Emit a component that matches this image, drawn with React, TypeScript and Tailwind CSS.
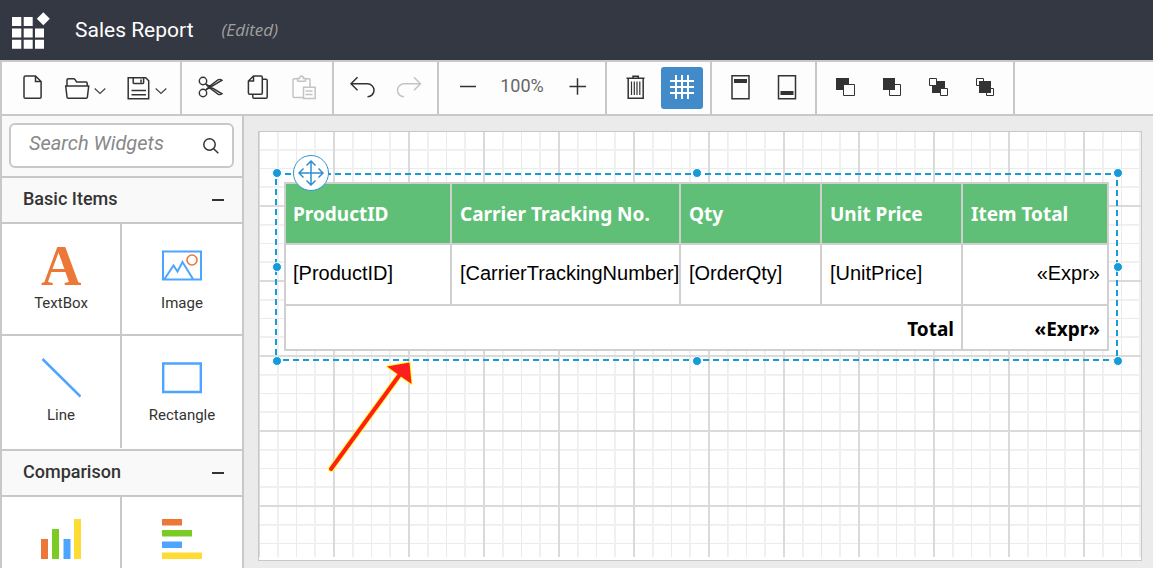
import React from "react";

type IconProps = { children: React.ReactNode; className?: string };

function Icon({ children, className = "text-[#333333]" }: IconProps) {
  return (
    <svg
      width="26"
      height="26"
      viewBox="0 0 26 26"
      fill="none"
      stroke="currentColor"
      strokeWidth="1.5"
      aria-hidden="true"
      className={className}
    >
      {children}
    </svg>
  );
}

function Chevron() {
  return (
    <svg width="12" height="8" viewBox="0 0 12 8" fill="none" stroke="#444" strokeWidth="1.2" aria-hidden="true" className="mt-1.5">
      <path d="M.7 1.5 6 6.5l5.300-5" />
    </svg>
  );
}

type ToolProps = { label: string; children: React.ReactNode; active?: boolean; disabled?: boolean };

function Tool({ label, children, active, disabled }: ToolProps) {
  return (
    <button
      type="button"
      aria-label={label}
      aria-pressed={active}
      disabled={disabled}
      className={`flex h-[42px] w-[42px] shrink-0 items-center justify-center rounded-[3px] ${active ? "bg-[#428bca]" : ""}`}
    >
      {children}
    </button>
  );
}

function SplitTool({ label, children }: ToolProps) {
  return (
    <button type="button" aria-label={label} aria-haspopup="menu" className="flex h-[42px] w-14 shrink-0 items-center justify-center gap-1 pr-0.5">
      {children}
      <Chevron />
    </button>
  );
}

function Group({ label, children, className = "px-[7px]" }: { label: string; children: React.ReactNode; className?: string }) {
  return (
    <div role="group" aria-label={label} className={`flex shrink-0 items-center gap-[5px] border-r-2 border-[#c8c8c8] ${className}`}>
      {children}
    </div>
  );
}

function Toolbar() {
  return (
    <div role="toolbar" aria-label="Report tools" className="flex h-14 shrink-0 border-y-2 border-l-2 border-[#c8c8c8] bg-[#fdfdfd]">
      <Group label="File" className="pl-[9px] pr-[5px]">
        <Tool label="New">
          <Icon>
            <path d="M16.500 1H6.500Q5 1 5 2.500V22q0 1.300 1.300 1.300h14.500q1.300 0 1.300-1.300V6.500zM16.500 1v5.500h5.600" />
          </Icon>
        </Tool>
        <SplitTool label="Open">
          <Icon>
            <path d="M3 11V5q0-1.200 1.200-1.200h5.300q1 0 1.600.9L12.600 7H22q1.200 0 1.200 1.200V11M1.700 11h23l-1.300 11q-.1 1.200-1.300 1.200H4.300Q3.100 23.200 3 22z" />
          </Icon>
        </SplitTool>
        <SplitTool label="Save">
          <Icon>
            <path d="M3.200 2.800h17.500l3 3v18H3.200zM8.200 2.800v5q0 .7.7.7h9q.7 0 .7-.7v-5M16 4.500v3M6.500 15.500h14.500M6.500 19.700h14.500" />
          </Icon>
        </SplitTool>
      </Group>

      <Group label="Clipboard">
        <Tool label="Cut">
          <Icon>
            <g strokeWidth="1.4">
              <circle cx="6" cy="6" r="3.700" />
              <circle cx="6" cy="18" r="3.700" />
              <path d="M8.500 8.800 25 18.800q-2 1.500-4 .3L11.500 12zM8.500 15.200 25 5.200q-2-1.500-4-.3L11.500 12z" />
            </g>
          </Icon>
        </Tool>
        <Tool label="Copy">
          <Icon>
            <path d="M9.500 1H17q1.300 0 1.300 1.300V18q0 1.300-1.300 1.300H5.700q-1.300 0-1.300-1.300V6zM9.500 1v5H4.400M18.300 4.200H22q1.200 0 1.200 1.200V22q0 1.300-1.200 1.300H10q-1.200 0-1.200-1.300v-2.700" />
          </Icon>
        </Tool>
        <Tool label="Paste" disabled>
          <Icon className="text-[#c4c4c4]">
            <path d="M12 22.500H3.200Q2 22.500 2 21.300V5q0-1.200 1.200-1.200h3.300M14.500 3.800h3.300Q19 3.800 19 5v6.500M6.500 5.500v-2h2Q8.700 1 10.500 1t2 2.500h2v2q0 .8-.8.8H7.300q-.8 0-.8-.8zM12.500 12.200h11.700v11.200H12.500zM14.500 16h7M14.500 19.500h7" />
          </Icon>
        </Tool>
      </Group>

      <Group label="History">
        <Tool label="Undo">
          <Icon>
            <path d="M8.500 2.300 2 8.800l6.500 6.500M2 8.800h16.500a6.500 6.500 0 0 1 0 13" />
          </Icon>
        </Tool>
        <Tool label="Redo" disabled>
          <Icon className="text-[#c4c4c4]">
            <path d="m18 2.300 6.500 6.500-6.500 6.500M24.500 8.800H8a6.500 6.500 0 0 0 0 13" />
          </Icon>
        </Tool>
      </Group>

      <Group label="Zoom">
        <Tool label="Zoom out">
          <Icon>
            <path d="M6 11.500h16" />
          </Icon>
        </Tool>
        <output className="w-[58px] pb-1 text-center text-lg leading-6 text-[#666666]">100%</output>
        <Tool label="Zoom in">
          <Icon>
            <path d="M5.500 11.500h16.500M13.500 3.300v16.500" />
          </Icon>
        </Tool>
      </Group>

      <Group label="Edit">
        <Tool label="Delete">
          <Icon>
            <path d="M4.500 3.200h18M6.200 3.200v20h15v-20M11 3V1.200h5.300V3" />
            <path strokeWidth="1.200" d="M9.500 6.500v13.500M12.300 6.500v13.500M15 6.500v13.500M17.800 6.500v13.500" />
          </Icon>
        </Tool>
        <Tool label="Show grid" active>
          <Icon className="text-white">
            <path strokeWidth="2" d="M7 0v24M13 0v24M19 0v24M1 6h24M1 12h24M1 18h24" />
          </Icon>
        </Tool>
      </Group>

      <Group label="Page sections">
        <Tool label="Header">
          <Icon>
            <path d="M5 .8h17v23H5z" />
            <path fill="currentColor" stroke="none" d="M7 4h13v4H7z" />
          </Icon>
        </Tool>
        <Tool label="Footer">
          <Icon>
            <path d="M4.500.8h17v23h-17z" />
            <path fill="currentColor" stroke="none" d="M6.500 16h13v4h-13z" />
          </Icon>
        </Tool>
      </Group>

      <Group label="Arrange" className="pl-[7px] pr-1.5">
        <Tool label="Bring forward">
          <Icon>
            <path fill="currentColor" stroke="none" d="M4 3h13v12H4z" />
            <path fill="#fdfdfd" strokeWidth="1" d="M11.500 9.500h11v11h-11z" />
          </Icon>
        </Tool>
        <Tool label="Send backward">
          <Icon>
            <path fill="#fdfdfd" strokeWidth="1" d="M10.500 9.500h11v11h-11z" />
            <path fill="currentColor" stroke="none" d="M4 3h12v12H4z" />
          </Icon>
        </Tool>
        <Tool label="Bring to front">
          <Icon>
            <path fill="currentColor" stroke="none" d="M6 6h13v12H6z" />
            <path fill="#fdfdfd" strokeWidth="1" d="M3.500 3.500h7v7h-7zM14.500 13.500h7v7h-7z" />
          </Icon>
        </Tool>
        <Tool label="Send to back">
          <Icon>
            <path fill="#fdfdfd" strokeWidth="1" d="M3.500 3.500h7v7h-7zM13.500 13.500h7v7h-7z" />
            <path fill="currentColor" stroke="none" d="M6 6h12v12H6z" />
          </Icon>
        </Tool>
      </Group>
    </div>
  );
}

function Widget({ name, children, className = "" }: { name?: string; children: React.ReactNode; className?: string }) {
  return (
    <button type="button" aria-label={name} className={`flex h-28 flex-col items-center border-[#c8c8c8] pt-[22px] odd:border-r-2 ${className}`}>
      <span className="flex h-10 w-10 shrink-0 items-center justify-center">{children}</span>
      {name && <span className="mt-1.5 text-[15px] leading-[22px]">{name}</span>}
    </button>
  );
}

function SectionHeader({ title }: { title: string }) {
  return (
    <h2 className="border-y-2 border-[#c8c8c8] bg-[#f9f9f9]">
      <button type="button" aria-expanded="true" className="flex h-11 w-full items-center justify-between pl-[21px] pr-[18px] text-lg font-medium leading-6">
        <span className="pb-0.5">{title}</span>
        <span className="h-0.5 w-3 bg-[#333333]" />
      </button>
    </h2>
  );
}

function Sidebar() {
  return (
    <aside className="w-[244px] shrink-0 overflow-hidden border-x-2 border-[#c8c8c8] bg-white text-[#333333]">
      <div className="bg-[#f9f9f9] pb-2 pl-[7px] pr-2 pt-[7px]">
        <label className="flex h-[45px] items-center rounded-md border-2 border-[#c8c8c8] bg-white pl-[18px] pr-3">
          <input
            type="text"
            aria-label="Search widgets"
            placeholder="Search Widgets"
            className="min-w-0 flex-1 bg-transparent pb-1.5 text-xl italic leading-6 outline-none placeholder:text-[#888888]"
          />
          <svg width="18" height="18" viewBox="0 0 18 18" fill="none" stroke="#333" strokeWidth="1.5" aria-hidden="true">
            <circle cx="7.500" cy="7.500" r="5.700" />
            <path d="m11.700 11.700 4.600 4.600" />
          </svg>
        </label>
      </div>
      <SectionHeader title="Basic Items" />
      <div className="grid grid-cols-2 pb-px">
        <Widget name="TextBox" className="border-b-2">
          <span aria-hidden="true" className="h-10 overflow-hidden font-['Liberation_Serif',serif] text-[56px] font-bold leading-10 text-[#ec7737]">A</span>
        </Widget>
        <Widget name="Image" className="border-b-2">
          <svg width="40" height="40" viewBox="0 0 40 40" fill="none" stroke="#4da5ff" strokeWidth="2" aria-hidden="true">
            <path d="M1 5.500h38v28H1zM2.500 33 11.500 19.500l4 6L20.500 16 31 33" />
            <circle cx="30" cy="14" r="5" stroke="#ec7737" strokeWidth="1.600" />
          </svg>
        </Widget>
        <Widget name="Line">
          <svg width="40" height="40" viewBox="0 0 40 40" stroke="#4da5ff" strokeWidth="2.500" aria-hidden="true">
            <path d="m1.500 1 38 37.500" />
          </svg>
        </Widget>
        <Widget name="Rectangle">
          <svg width="40" height="40" viewBox="0 0 40 40" fill="none" stroke="#4da5ff" strokeWidth="2.400" aria-hidden="true">
            <path d="M1.200 5.500h37.600v28.500H1.200z" />
          </svg>
        </Widget>
      </div>
      <SectionHeader title="Comparison" />
      <div className="grid grid-cols-2">
        <Widget>
          <svg width="40" height="40" viewBox="0 0 40 40" role="img" aria-label="Column chart">
            <path fill="#ec7737" d="M0 20h7v20H0z" />
            <path fill="#7ccb25" d="M11 10h7v30h-7z" />
            <path fill="#4da5ff" d="M22.500 20h7v20h-7z" />
            <path fill="#ffdc33" d="M33 0h7v40h-7z" />
          </svg>
        </Widget>
        <Widget>
          <svg width="40" height="40" viewBox="0 0 40 40" role="img" aria-label="Bar chart">
            <path fill="#ec7737" d="M0 0h20v6.500H0z" />
            <path fill="#7ccb25" d="M0 11h30v6.500H0z" />
            <path fill="#4da5ff" d="M0 22.500h20V29H0z" />
            <path fill="#ffdc33" d="M0 33.500h40V40H0z" />
          </svg>
        </Widget>
      </div>
    </aside>
  );
}

const handles = [
  "left-[2px] top-0",
  "left-1/2 top-0",
  "left-full top-0",
  "left-[2px] top-1/2",
  "left-full top-1/2",
  "left-[2px] top-full",
  "left-1/2 top-full",
  "left-full top-full",
];

const headers = ["ProductID", "Carrier Tracking No.", "Qty", "Unit Price", "Item Total"];
const fields = ["[ProductID]", "[CarrierTrackingNumber]", "[OrderQty]", "[UnitPrice]"];

function ReportTable() {
  return (
    <table className="w-full table-fixed border-collapse whitespace-nowrap bg-white text-xl leading-6 text-black">
      <colgroup>
        <col className="w-[166px]" />
        <col className="w-[229px]" />
        <col className="w-[141px]" />
        <col className="w-[141px]" />
        <col />
      </colgroup>
      <thead>
        <tr className="h-[61px] bg-[#5fbf77]">
          {headers.map((h) => (
            <th key={h} className="border-2 border-[#d0d0d0] p-0 pl-2 text-left font-['Noto_Sans',sans-serif] text-[19px] font-bold leading-6 text-white first:pl-[7px]">
              {h}
            </th>
          ))}
        </tr>
      </thead>
      <tbody className="font-['Liberation_Sans',sans-serif]">
        <tr className="h-[61px]">
          {fields.map((f) => (
            <td key={f} className="border-2 border-[#d0d0d0] p-0 pb-1 pl-2 first:pl-[7px]">
              {f}
            </td>
          ))}
          <td className="border-2 border-[#d0d0d0] p-0 pb-1 pr-[7px] text-right">«Expr»</td>
        </tr>
        <tr className="h-[45px] font-['Noto_Sans',sans-serif] text-[19px] font-bold leading-6">
          <td colSpan={4} className="border-2 border-[#d0d0d0] p-0 pr-[7px] pt-0.5 text-right">Total</td>
          <td className="border-2 border-[#d0d0d0] p-0 pr-[7px] pt-0.5 text-right">«Expr»</td>
        </tr>
      </tbody>
    </table>
  );
}

function Canvas() {
  return (
    <main className="flex min-w-0 flex-1 flex-col bg-[#ebebeb] pb-[7px] pl-[14px] pr-[11px] pt-[15px]">
      <div className="relative flex flex-1 flex-col border border-[#c8c8c8] bg-white pb-[3px]">
        <div className="flex-1 bg-[linear-gradient(to_right,#dadada_2px,transparent_2px),linear-gradient(to_bottom,#dadada_2px,transparent_2px),linear-gradient(to_right,transparent_19px,#ececec_19px,#f4f4f4_21px,transparent_21px,transparent_38px,#ebebeb_38px,#ebebeb_39px,transparent_39px,transparent_56px,#f0f0f0_56px,#f0f0f0_58px,transparent_58px),linear-gradient(to_bottom,transparent_19px,#ececec_19px,#f4f4f4_21px,transparent_21px,transparent_38px,#ebebeb_38px,#ebebeb_39px,transparent_39px,transparent_56px,#f0f0f0_56px,#f0f0f0_58px,transparent_58px)] bg-size-[75px_75px] bg-position-[-1px_-2px] pl-4 pr-[23px] pt-[41px]">
          <div className="relative p-[9px] pb-[10px]">
            <ReportTable />
            <svg className="pointer-events-none absolute inset-0 h-full w-full overflow-visible" fill="none" stroke="#159bd8" strokeWidth="4" strokeDasharray="6 4" aria-hidden="true">
              <svg width="100%" height="100%">
                <rect width="100%" height="100%" />
              </svg>
            </svg>
            {handles.map((place) => (
              <span key={place} className={`absolute h-[10px] w-[10px] -translate-x-1/2 -translate-y-1/2 rounded-full border border-white bg-[#159bd8] ${place}`} />
            ))}
            <button type="button" aria-label="Move table" className="absolute -top-[18px] left-[18px] flex h-9 w-9 items-center justify-center rounded-full border border-[#2f95d6] bg-white">
              <svg width="26" height="26" viewBox="0 0 26 26" fill="none" stroke="#2f8fd0" strokeWidth="1.500" aria-hidden="true">
                <path d="M13 1v24M1 13h24M8.500 5.500 13 1l4.500 4.500M8.500 20.500 13 25l4.500-4.500M5.500 8.500 1 13l4.500 4.500M20.500 8.500 25 13l-4.500 4.500" />
              </svg>
            </button>
          </div>
        </div>
        <svg width="92" height="116" viewBox="0 0 92 116" className="pointer-events-none absolute left-[67px] top-[226px]" role="img" aria-label="Arrow pointing at the table">
          <g stroke="#ffff20" strokeWidth="2" strokeLinejoin="round">
            <path d="M5 111 75 15" strokeWidth="6" strokeLinecap="round" />
            <path d="M83.500 4.500 61 8.500l24.500 17.500z" fill="#ff1e1e" />
          </g>
          <path d="M5 111 75 15" stroke="#ff1e1e" strokeWidth="4" strokeLinecap="round" />
          <path d="M83.500 4.500 61 8.500l24.500 17.500z" fill="#ff1e1e" />
        </svg>
      </div>
    </main>
  );
}

export default function App() {
  return (
    <div className="flex h-screen flex-col overflow-hidden font-[Roboto,sans-serif]">
      <header className="flex h-[60px] shrink-0 items-center bg-[#343842] pl-3">
        <svg width="38" height="38" viewBox="0 0 38 38" fill="#fff" role="img" aria-label="Report designer" className="shrink-0">
          <path d="M0 6h9.300v9H0zM11.700 6h9v9h-9zM0 17.500h9.300v9H0zM11.700 17.500h9v9h-9zM23 17.500h9v9h-9zM0 28.700h9.300v9H0zM11.700 28.700h9v9h-9zM23 28.700h9v9h-9z" />
          <path d="m31.300 1.200 6.500 6.500-6.500 6.500-6.500-6.500z" />
        </svg>
        <h1 className="ml-[25px] text-[21px] leading-7 text-white">Sales Report</h1>
        <span className="ml-7 font-['Open_Sans',sans-serif] text-[17px] italic leading-6 text-[#a0a0a0]">(Edited)</span>
      </header>
      <Toolbar />
      <div className="flex min-h-0 flex-1">
        <Sidebar />
        <Canvas />
      </div>
    </div>
  );
}
